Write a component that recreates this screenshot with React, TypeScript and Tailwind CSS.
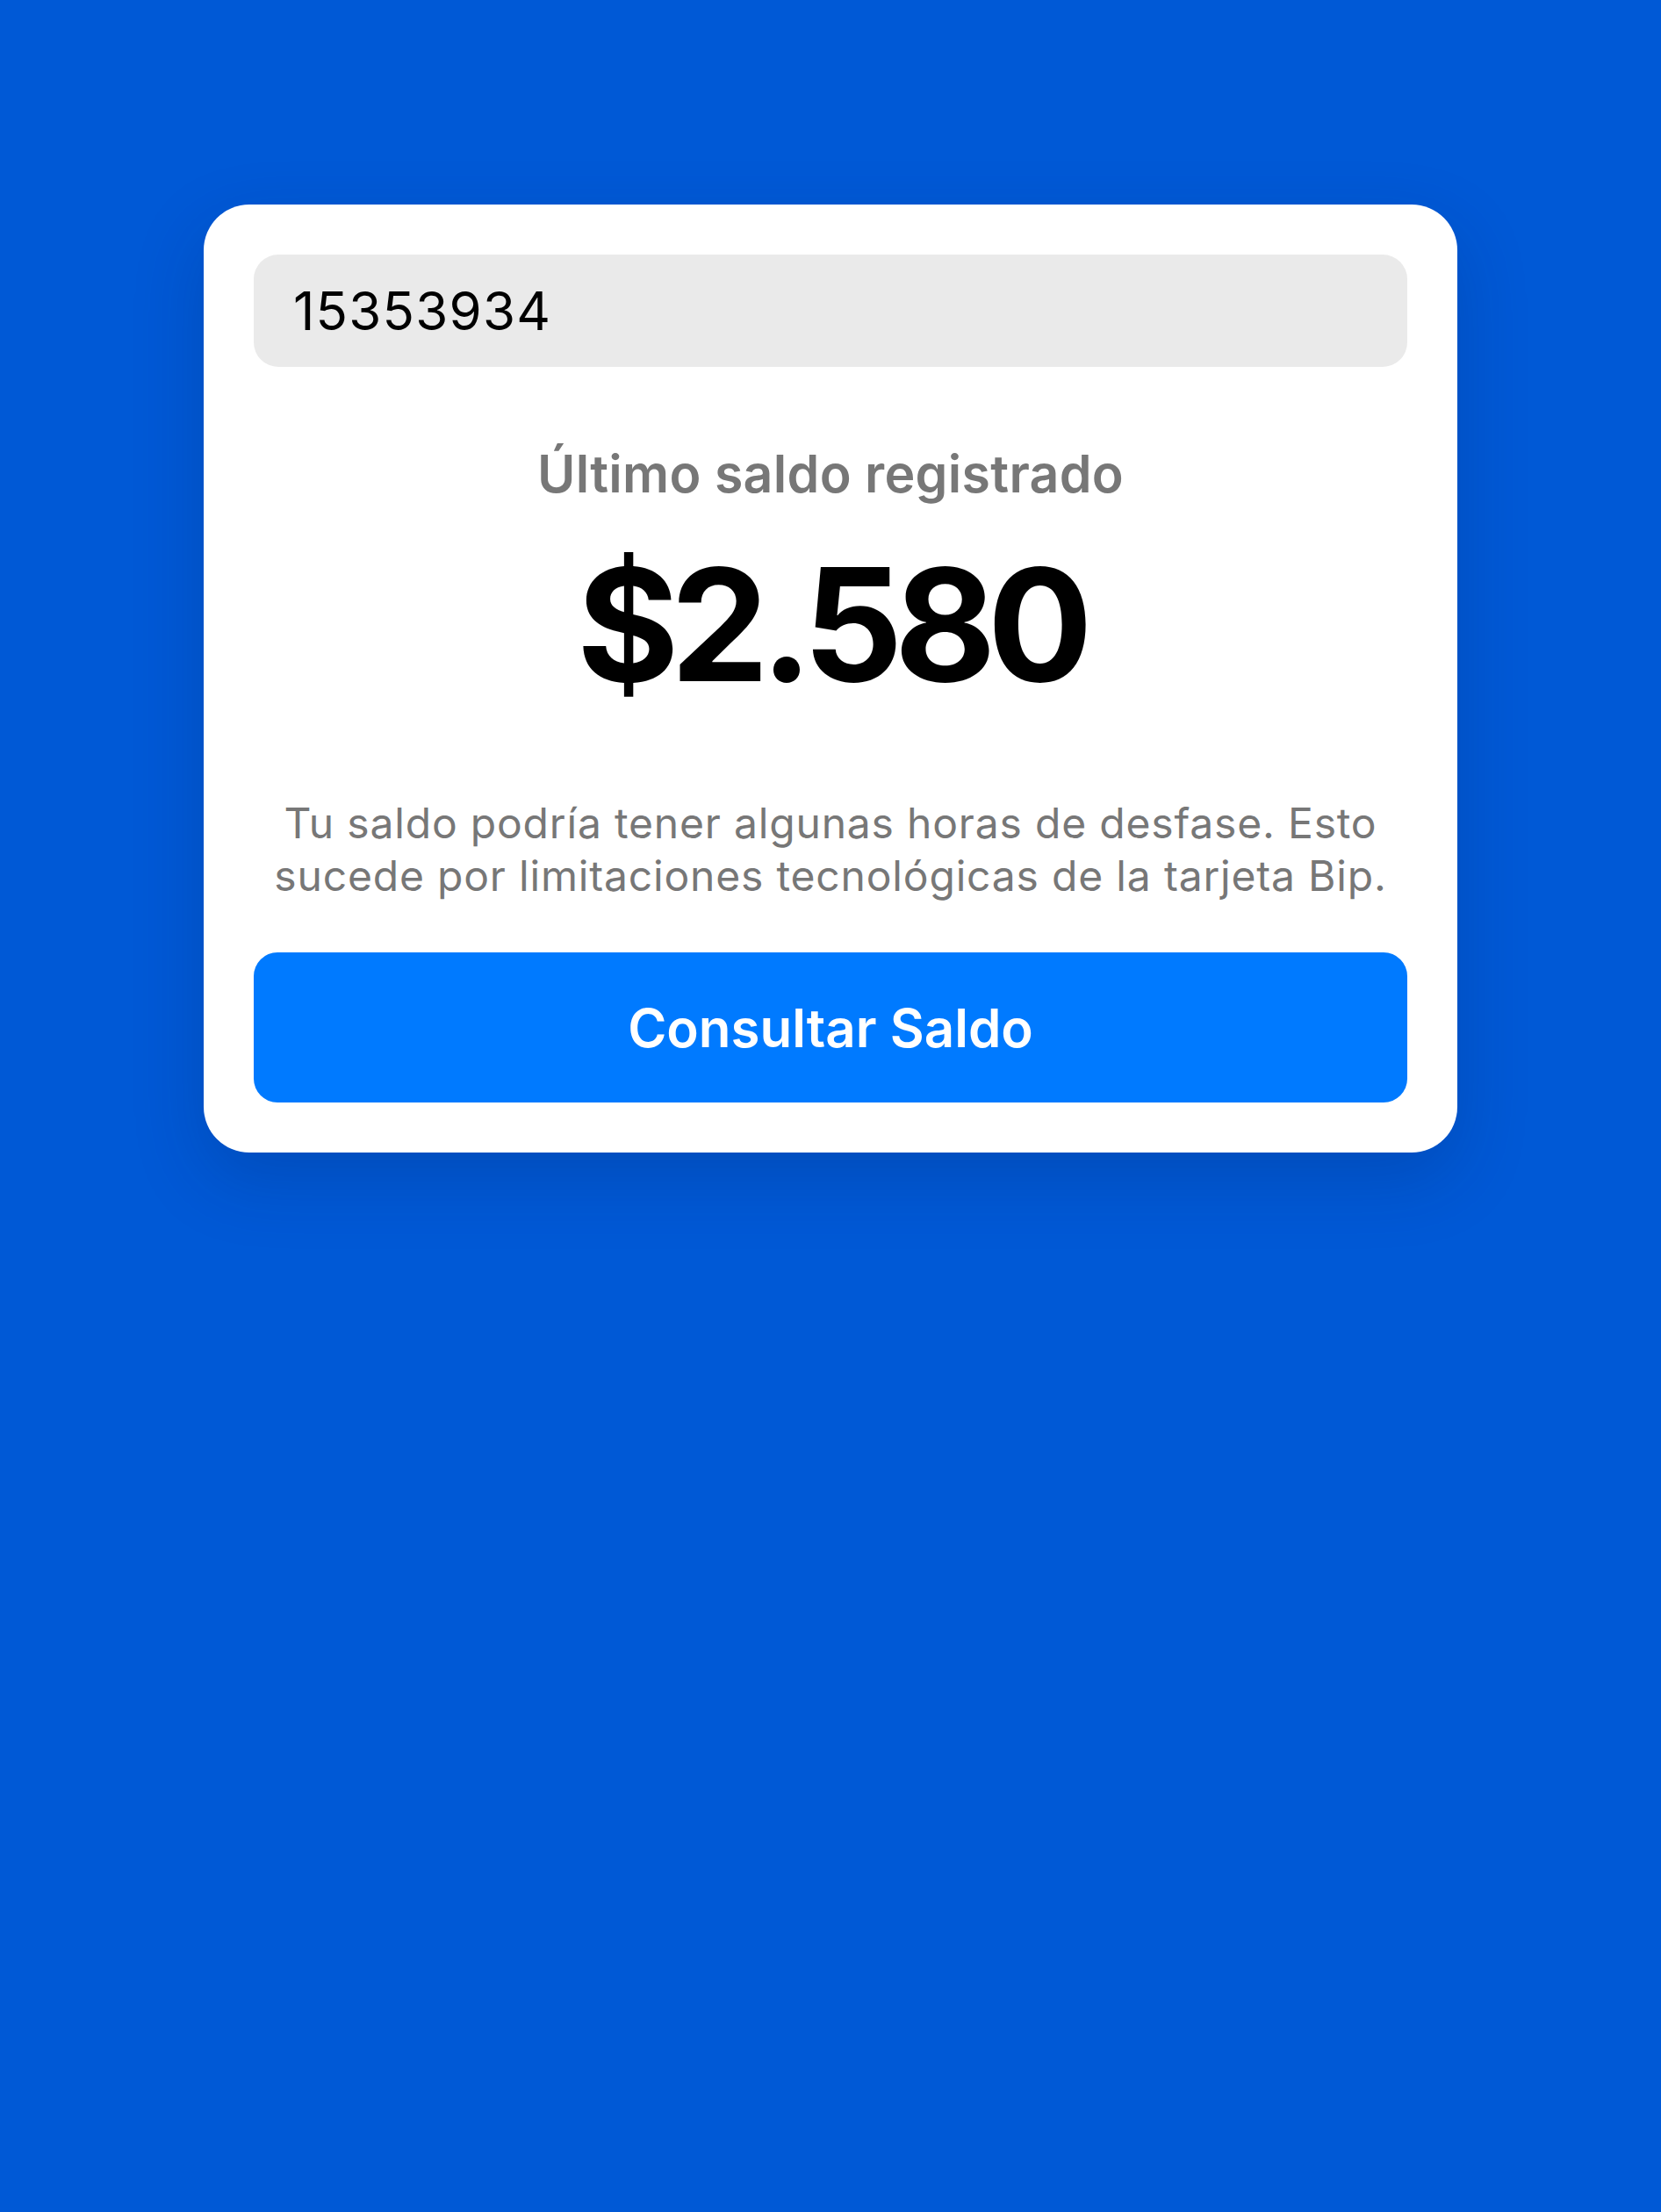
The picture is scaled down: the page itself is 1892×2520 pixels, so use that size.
export default function App() {
  return (
    <div className="flex min-h-[2520px] justify-center bg-[#0059d6] pt-[233px] font-['Inter','Noto_Sans',sans-serif]">
      <div className="h-fit w-[1428px] rounded-[52px] bg-white p-[57px] shadow-[0_30px_80px_rgba(0,30,90,0.22)]">
        {/* Card number input */}
        <div className="flex h-[128px] items-center rounded-[28px] bg-[#eaeaea] px-[45px] text-[60px] tracking-[0.02em] text-black">
          15353934
        </div>

        <p className="mt-[86px] text-center text-[59px] font-semibold leading-[72px] tracking-[0.005em] text-[#777777]">
          Último saldo registrado
        </p>
        <p className="mt-[47px] text-center text-[178px] font-bold leading-none tracking-[-0.055em] text-black">
          $2.580
        </p>

        <p className="mt-[107px] text-center text-[48px] leading-[60px] tracking-[0.017em] text-[#777777]">
          Tu saldo podría tener algunas horas de desfase. Esto
          <br />
          sucede por limitaciones tecnológicas de la tarjeta Bip.
        </p>

        <button className="mt-[57px] flex h-[171px] w-full items-center justify-center rounded-[27px] bg-[#007aff] text-[60px] font-semibold text-white">
          Consultar Saldo
        </button>
      </div>
    </div>
  );
}
